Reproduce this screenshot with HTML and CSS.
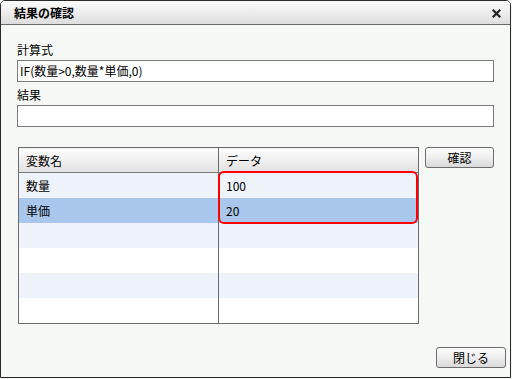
FILE: index.html
```html
<!DOCTYPE html>
<html lang="ja">
<head>
    <meta charset="UTF-8">
    <title>結果の確認</title>
    <link rel="stylesheet" href="styles.css">
</head>
<body>
    <div class="window">
        <div class="titlebar">
            <span class="title">結果の確認</span>
            <svg class="close" width="9" height="9" viewBox="0 0 9 9">
                <path d="M1.5 1.5 L7.5 7.5 M7.5 1.5 L1.5 7.5" stroke="#222" stroke-width="2.2" stroke-linecap="square"/>
            </svg>
        </div>

        <div class="content">
            <label class="field-label">計算式</label>
            <div class="textbox">IF(数量&gt;0,数量*単価,0)</div>

            <label class="field-label">結果</label>
            <div class="textbox"></div>

            <div class="grid-area">
                <div class="grid-wrap">
                    <table class="grid">
                        <thead>
                            <tr><th>変数名</th><th class="col2">データ</th></tr>
                        </thead>
                        <tbody>
                            <tr class="alt"><td>数量</td><td class="col2">100</td></tr>
                            <tr class="selected"><td>単価</td><td class="col2">20</td></tr>
                            <tr class="alt"><td></td><td class="col2"></td></tr>
                            <tr><td></td><td class="col2"></td></tr>
                            <tr class="alt"><td></td><td class="col2"></td></tr>
                            <tr><td></td><td class="col2"></td></tr>
                        </tbody>
                    </table>
                    <div class="highlight"></div>
                </div>
                <button class="btn">確認</button>
            </div>
        </div>

        <div class="footer">
            <button class="btn">閉じる</button>
        </div>
    </div>
</body>
</html>
```

FILE: styles.css
```css
body {
    margin: 0;
    background-color: #f4f6f3;
    font-family: "Noto Sans CJK JP", "Liberation Sans", sans-serif;
    font-size: 12px;
    color: #000;
}
.window {
    width: 511px;
    height: 378px;
    box-sizing: border-box;
    border: 1px solid #2a2a2a;
    border-radius: 5px 5px 0 0;
    background-color: #f6f8f5;
    display: flex;
    flex-direction: column;
    overflow: hidden;
}
.titlebar {
    height: 23px;
    flex: none;
    border-bottom: 1px solid #6a6a6a;
    background: linear-gradient(#fbfbfb, #e9eae9 60%, #dcdddc);
    display: flex;
    align-items: center;
    justify-content: space-between;
    padding: 0 9px 0 13px;
}
.title {
    font-weight: bold;
    font-size: 12px;
    line-height: 16px;
}
.close {
    display: block;
    margin-top: 1px;
}
.content {
    flex: 1;
    padding: 0 16px;
}
.field-label {
    display: block;
    line-height: 16px;
    margin-top: 2px;
    margin-bottom: 2px;
}
.content .field-label:first-child {
    margin-top: 17px;
}
.textbox {
    height: 22px;
    box-sizing: border-box;
    border: 1px solid #7c7c7c;
    background-color: #fff;
    line-height: 20px;
    padding: 0 2px;
    margin-bottom: 5px;
}
.grid-area {
    display: flex;
    align-items: flex-start;
    gap: 6px;
    margin-top: 20px;
    margin-left: 1px;
}
.grid-wrap {
    position: relative;
}
.grid {
    width: 401px;
    border-collapse: collapse;
    border: 1px solid #6c6c6c;
    table-layout: fixed;
    background-color: #fff;
}
.grid th {
    height: 24px;
    padding: 0 7px;
    text-align: left;
    font-weight: normal;
    border-bottom: 1px solid #7a7a7a;
    background: linear-gradient(#fdfdfd, #ececec 60%, #e0e0e0);
}
.grid td {
    height: 25px;
    padding: 0 7px;
}
.grid .col2 {
    border-left: 1px solid #6c6c6c;
}
.grid tr.alt td {
    background-color: #eef3fa;
}
.grid tr.selected td {
    background-color: #a9c6ec;
}
.highlight {
    position: absolute;
    left: 200px;
    top: 24px;
    width: 200px;
    height: 53px;
    box-sizing: border-box;
    border: 2px solid #ff0000;
    border-radius: 6px;
}
.btn {
    width: 70px;
    height: 21px;
    padding: 0;
    border: 1px solid #6e6e6e;
    border-radius: 3px;
    background: linear-gradient(#fefefe, #ececec 55%, #d9d9d9);
    font-family: "Noto Sans CJK JP", "Liberation Sans", sans-serif;
    font-size: 12px;
    line-height: 19px;
    color: #000;
}
.footer {
    flex: none;
    display: flex;
    justify-content: flex-end;
    padding: 0 4px 9px 0;
}
```
